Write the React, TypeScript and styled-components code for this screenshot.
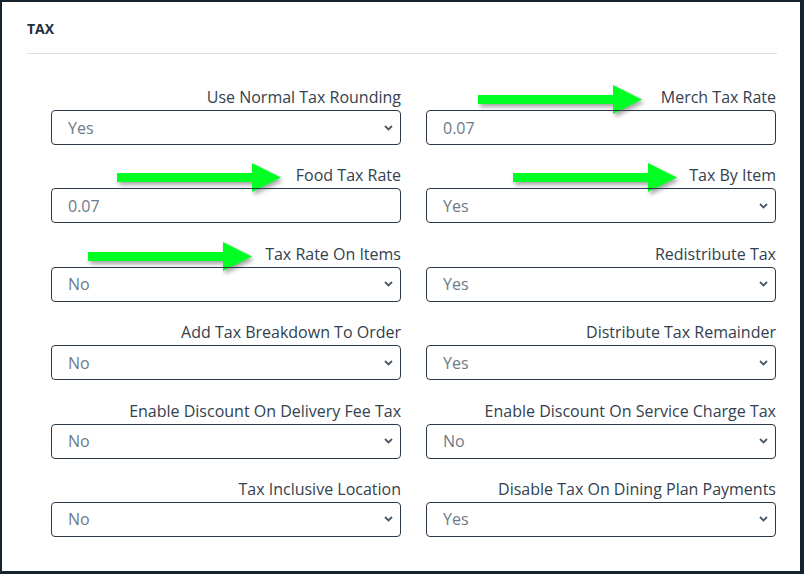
import { FC } from "react";
import { styled, createGlobalStyle } from "styled-components";

const GlobalStyle = createGlobalStyle`
  html, body {
    margin: 0;
    padding: 0;
    background: #ffffff;
  }
  body {
    font-family: "Open Sans", "Liberation Sans", sans-serif;
  }
`;

const Frame = styled.div`
  box-sizing: border-box;
  width: 804px;
  height: 574px;
  border-style: solid;
  border-color: #15232f;
  border-width: 2px 4px 3px 2px;
  background: #fff;
  padding: 17px 25px 0 25px;
`;

const SectionTitle = styled.h2`
  margin: 0;
  font-size: 14px;
  font-weight: 700;
  line-height: 20px;
  color: #1e2f40;
  padding-bottom: 14px;
  border-bottom: 1px solid #dedede;
  width: 750px;
`;

const Grid = styled.div`
  display: grid;
  grid-template-columns: 350px 350px;
  column-gap: 25px;
  row-gap: 19.4px;
  padding: 32px 0 0 24px;
`;

const Field = styled.div`
  position: relative;
  display: flex;
  flex-direction: column;
`;

const Label = styled.label`
  display: block;
  text-align: right;
  font-size: 16px;
  line-height: 23px;
  color: #33414e;
  margin-bottom: 1px;
`;

const Control = styled.div`
  position: relative;
  box-sizing: border-box;
  height: 35px;
  border: 1px solid #2b3946;
  border-radius: 4px;
  display: flex;
  align-items: center;
  padding: 0 16px;
  font-size: 16px;
  color: #6c7a89;
`;

const Value = styled.span`
  flex: 1;
`;

const Chevron = styled.svg`
  width: 9px;
  height: 6px;
  margin-right: -9px;
`;

const ArrowMark = styled.svg<{ $right: number }>`
  position: absolute;
  top: -3px;
  right: ${(p) => p.$right}px;
  width: 165px;
  height: 34px;
  overflow: visible;
  filter: drop-shadow(2px 3px 2px rgba(0, 0, 0, 0.35));
  pointer-events: none;
`;

type Item = {
  label: string;
  value: string;
  select: boolean;
  arrow?: number;
};

const items: Item[] = [
  { label: "Use Normal Tax Rounding", value: "Yes", select: true },
  { label: "Merch Tax Rate", value: "0.07", select: false, arrow: 133 },
  { label: "Food Tax Rate", value: "0.07", select: false, arrow: 119 },
  { label: "Tax By Item", value: "Yes", select: true, arrow: 98 },
  { label: "Tax Rate On Items", value: "No", select: true, arrow: 148 },
  { label: "Redistribute Tax", value: "Yes", select: true },
  { label: "Add Tax Breakdown To Order", value: "No", select: true },
  { label: "Distribute Tax Remainder", value: "Yes", select: true },
  { label: "Enable Discount On Delivery Fee Tax", value: "No", select: true },
  { label: "Enable Discount On Service Charge Tax", value: "No", select: true },
  { label: "Tax Inclusive Location", value: "No", select: true },
  { label: "Disable Tax On Dining Plan Payments", value: "Yes", select: true },
];

const Arrow: FC<{ right: number }> = ({ right }) => (
  <ArrowMark $right={right} viewBox="0 0 165 34">
    <path d="M0 12 H135 V2 L164 16.5 L135 31 V21 H0 Z" fill="#00ff22" />
  </ArrowMark>
);

const TaxField: FC<{ item: Item }> = ({ item }) => (
  <Field>
    {item.arrow !== undefined && <Arrow right={item.arrow} />}
    <Label>{item.label}</Label>
    <Control>
      <Value>{item.value}</Value>
      {item.select && (
        <Chevron viewBox="0 0 9 6">
          <path d="M1 1 L4.5 4.5 L8 1" fill="none" stroke="#4a5866" strokeWidth="1.8" />
        </Chevron>
      )}
    </Control>
  </Field>
);

const App: FC = () => (
  <>
    <GlobalStyle />
    <Frame>
      <SectionTitle>TAX</SectionTitle>
      <Grid>
        {items.map((item) => (
          <TaxField key={item.label} item={item} />
        ))}
      </Grid>
    </Frame>
  </>
);

export default App;
